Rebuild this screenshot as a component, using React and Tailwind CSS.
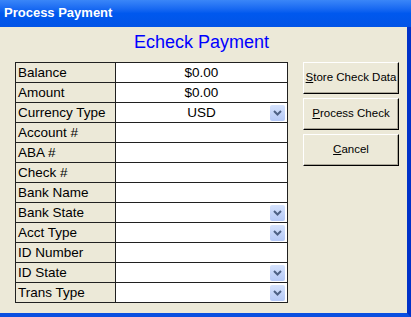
const rows = [
  { label: 'Balance', value: '$0.00' },
  { label: 'Amount', value: '$0.00' },
  { label: 'Currency Type', value: 'USD', select: true },
  { label: 'Account #' },
  { label: 'ABA #' },
  { label: 'Check #' },
  { label: 'Bank Name' },
  { label: 'Bank State', select: true },
  { label: 'Acct Type', select: true },
  { label: 'ID Number' },
  { label: 'ID State', select: true },
  { label: 'Trans Type', select: true },
];

function DropArrow() {
  return (
    <span className="absolute right-[2px] top-[2px] flex h-[16px] w-[15px] items-center justify-center rounded-[2px] bg-gradient-to-b from-[#d6e3fd] to-[#b4c8f6]">
      <svg width="9" height="6" viewBox="0 0 9 6">
        <path d="M1 1 L4.5 4.5 L8 1" fill="none" stroke="#4d6185" strokeWidth="2" />
      </svg>
    </span>
  );
}

function XpButton({ first, rest }) {
  return (
    <button
      type="button"
      className="h-[32px] w-[96px] whitespace-nowrap border border-t-white border-l-white border-r-black border-b-black bg-[#ece9d8] px-0 text-[11.5px] text-black shadow-[inset_-1px_-1px_0_#aca899]"
    >
      <span className="underline">{first}</span>
      {rest}
    </button>
  );
}

export default function App() {
  return (
    <div className="flex h-[317px] w-[411px] flex-col overflow-hidden font-['Liberation_Sans',Arial,sans-serif]">
      <div className="flex h-[27px] shrink-0 items-center bg-gradient-to-b from-[#3a86f8] via-[#0058ee] to-[#0254e6] pb-[1px] pl-[4px] text-[13px] font-bold text-white">
        Process Payment
      </div>
      <div className="flex min-h-0 flex-1 flex-col border-b-4 border-r-4 border-b-[#0a4fe0] border-r-[#0031c8] bg-[#ece9d8]">
        <div className="flex h-[35px] items-start justify-center pr-[4px] pt-[3px] text-[18px] leading-[24px] text-[#0000ff]">
          Echeck Payment
        </div>
        <div className="flex items-start">
          <div className="ml-[15px] w-[273px] border-l border-t border-[#202020]">
            {rows.map((row) => (
              <div key={row.label} className="grid h-[20px] grid-cols-[100px_1fr] text-[13.5px] leading-[19px]">
                <div className="whitespace-nowrap border-b border-r border-[#202020] bg-[#ece9d8] pl-[2px] text-black">
                  {row.label}
                </div>
                <div className="relative border-b border-r border-[#202020] bg-white text-center text-black">
                  {row.value}
                  {row.select && <DropArrow />}
                </div>
              </div>
            ))}
          </div>
          <div className="ml-[15px] flex flex-col gap-[4px]">
            <XpButton first="S" rest="tore Check Data" />
            <XpButton first="P" rest="rocess Check" />
            <XpButton first="C" rest="ancel" />
          </div>
        </div>
      </div>
    </div>
  );
}
